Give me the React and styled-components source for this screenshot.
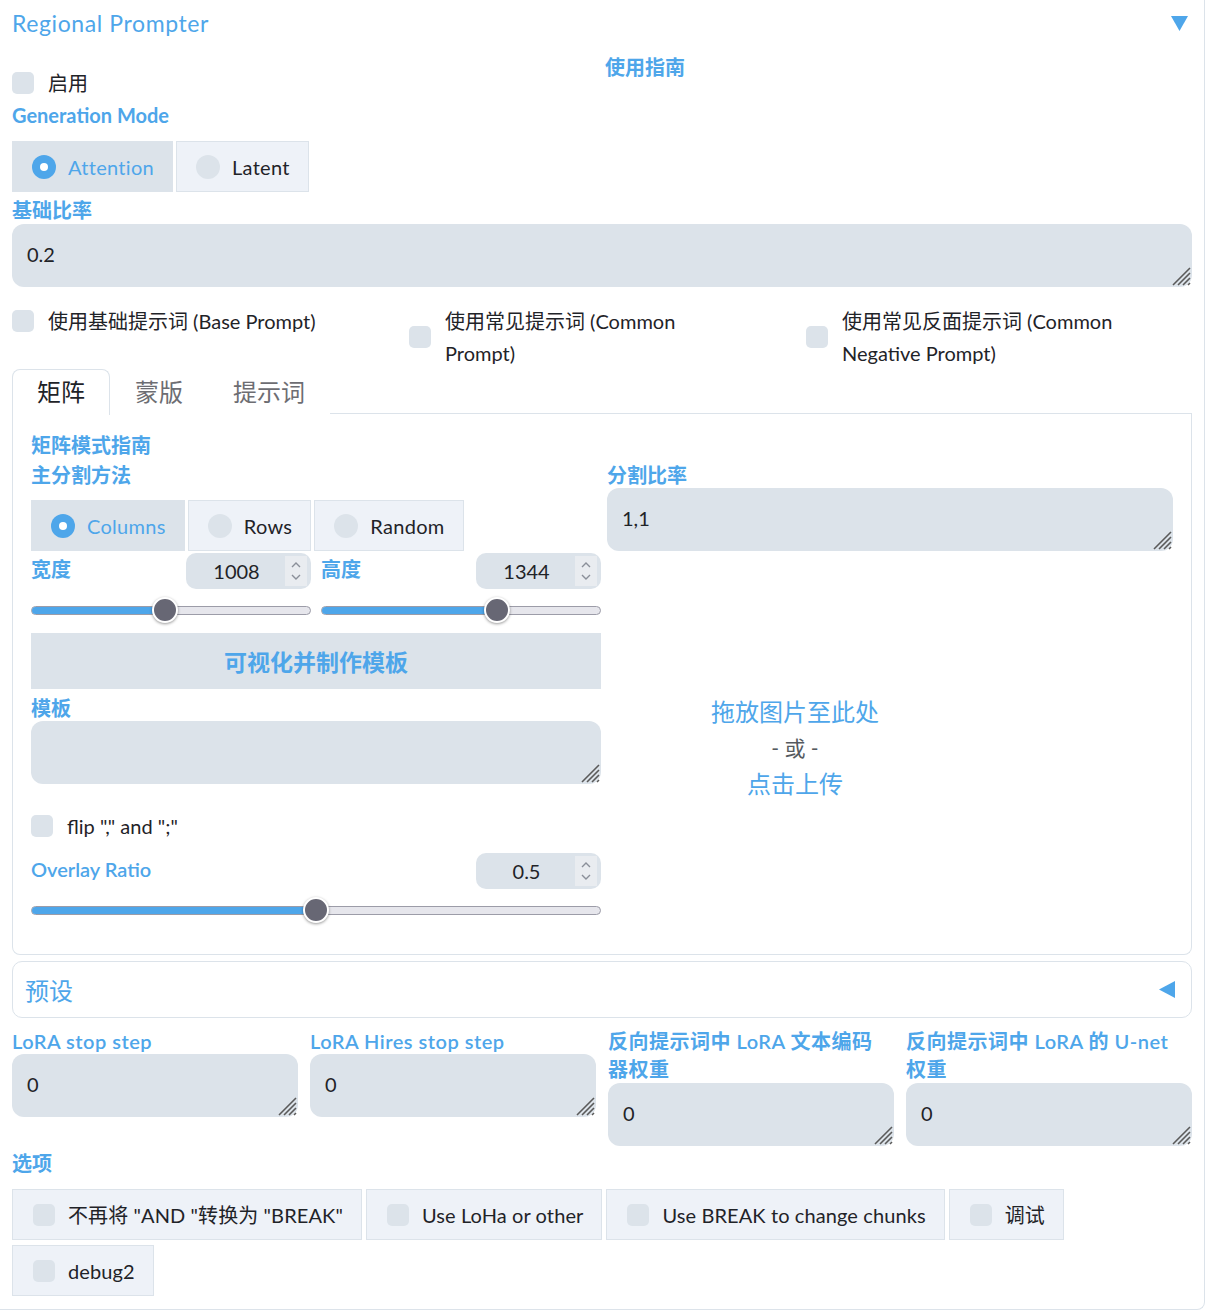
import React from 'react'
import styled, { createGlobalStyle } from 'styled-components'

const blue = '#4ea6ea'
const fill = '#dce3ea'
const light = '#eef2f8'

const Global = createGlobalStyle`
  * { box-sizing: border-box; }
  body {
    margin: 0;
    background: #fff;
    font-family: Lato, "Noto Sans CJK SC", sans-serif;
    color: #1f2328;
  }
`

const App = () => {
  return (
    <>
      <Global />
      <Block>
        <Header>
          <Title>Regional Prompter</Title>
          <svg width="17" height="15" viewBox="0 0 17 15">
            <path d="M0 0 H17 L8.5 15 Z" fill={blue} />
          </svg>
        </Header>

        <TopRow>
          <EnableCell>
            <Check label="启用" />
          </EnableCell>
          <Guide>使用指南</Guide>
        </TopRow>

        <FieldLabel $mb={13}>Generation Mode</FieldLabel>
        <RadioGroup>
          <Radio label="Attention" checked />
          <Radio label="Latent" />
        </RadioGroup>

        <FieldLabel $mt={5} $mb={1}>基础比率</FieldLabel>
        <TextBox value="0.2" />

        <CheckRow>
          <Check label="使用基础提示词 (Base Prompt)" />
          <Check label="使用常见提示词 (Common Prompt)" maxw={250} />
          <Check label="使用常见反面提示词 (Common Negative Prompt)" />
        </CheckRow>

        <TabBar>
          <Tab $active>矩阵</Tab>
          <Tab>蒙版</Tab>
          <Tab>提示词</Tab>
        </TabBar>
        <TabPanel>
          <PanelHead>矩阵模式指南</PanelHead>
          <TwoCol>
            <Col>
              <FieldLabel $mb={12}>主分割方法</FieldLabel>
              <RadioGroup>
                <Radio label="Columns" checked />
                <Radio label="Rows" />
                <Radio label="Random" />
              </RadioGroup>

              <DimRow>
                <div>
                  <NumRow>
                    <NumLabel>宽度</NumLabel>
                    <NumberBox value="1008" />
                  </NumRow>
                  <Slider pct={0.476} />
                </div>
                <div>
                  <NumRow>
                    <NumLabel>高度</NumLabel>
                    <NumberBox value="1344" />
                  </NumRow>
                  <Slider pct={0.642} />
                </div>
              </DimRow>

              <BigButton>可视化并制作模板</BigButton>

              <FieldLabel $mt={6}>模板</FieldLabel>
              <TextBox value="" />

              <FlipRow>
                <Check label={'flip "," and ";"'} />
              </FlipRow>

              <NumRow $mt={11}>
                <NumLabel $weight={600}>Overlay Ratio</NumLabel>
                <NumberBox value="0.5" />
              </NumRow>
              <Slider pct={0.5} />
            </Col>

            <Col>
              <FieldLabel>分割比率</FieldLabel>
              <TextBox value="1,1" />
              <Upload>
                <UpLine>拖放图片至此处</UpLine>
                <UpLine $muted>- 或 -</UpLine>
                <UpLine>点击上传</UpLine>
              </Upload>
            </Col>
          </TwoCol>
        </TabPanel>

        <Accordion>
          <AccTitle>预设</AccTitle>
          <svg width="16" height="17" viewBox="0 0 16 17">
            <path d="M16 0 V17 L0 8.5 Z" fill={blue} />
          </svg>
        </Accordion>

        <FourCol>
          <Cell>
            <SmallLabel $one>LoRA stop step</SmallLabel>
            <TextBox value="0" />
          </Cell>
          <Cell>
            <SmallLabel $one>LoRA Hires stop step</SmallLabel>
            <TextBox value="0" />
          </Cell>
          <Cell>
            <SmallLabel>反向提示词中 LoRA 文本编码器权重</SmallLabel>
            <TextBox value="0" />
          </Cell>
          <Cell>
            <SmallLabel>反向提示词中 LoRA 的 U-net 权重</SmallLabel>
            <TextBox value="0" />
          </Cell>
        </FourCol>

        <FieldLabel $mt={4} $mb={13}>选项</FieldLabel>
        <Options>
          <OptItem label={'不再将 "AND "转换为 "BREAK"'} />
          <OptItem label="Use LoHa or other" />
          <OptItem label="Use BREAK to change chunks" />
          <OptItem label="调试" />
          <OptItem label="debug2" />
        </Options>
      </Block>
    </>
  )
}

export default App

const Check = ({ label, maxw }) => (
  <CheckLabel>
    <Box />
    <CheckText $maxw={maxw}>{label}</CheckText>
  </CheckLabel>
)

const Radio = ({ label, checked }) => (
  <RadioItem $on={checked}>
    <Dot $on={checked} />
    <span>{label}</span>
  </RadioItem>
)

const OptItem = ({ label }) => (
  <Opt>
    <Box />
    <span>{label}</span>
  </Opt>
)

const TextBox = ({ value }) => (
  <AreaWrap>
    <Area defaultValue={value} />
    <Grip width="20" height="20" viewBox="0 0 20 20">
      <path
        d="M19 2 L2 19 M19 7 L7 19 M19 12 L12 19 M19 17 L17 19"
        stroke="#5a5a5a"
        strokeWidth="1.6"
      />
    </Grip>
  </AreaWrap>
)

const NumberBox = ({ value }) => (
  <Num>
    <NumVal>{value}</NumVal>
    <Spin>
      <svg width="12" height="22" viewBox="0 0 12 22">
        <path d="M2 7 L6 3 L10 7" stroke="#8a8f99" strokeWidth="1.4" fill="none" />
        <path d="M2 15 L6 19 L10 15" stroke="#8a8f99" strokeWidth="1.4" fill="none" />
      </svg>
    </Spin>
  </Num>
)

const Slider = ({ pct }) => (
  <SliderWrap>
    <Track>
      <Fill style={{ width: `calc(13px + ${pct} * (100% - 26px))` }} />
    </Track>
    <Thumb style={{ left: `calc(${pct} * (100% - 26px))` }} />
  </SliderWrap>
)

const Block = styled.div`
  width: 1205px;
  border-right: 1px solid ${fill};
  border-bottom: 1px solid ${fill};
  border-bottom-right-radius: 8px;
  padding: 0 12px 13px 12px;
`
const Header = styled.div`
  height: 46px;
  display: flex;
  align-items: center;
  justify-content: space-between;
  padding-right: 4px;
`
const Title = styled.div`
  font-size: 23px;
  color: ${blue};
  letter-spacing: 0.6px;
`
const TopRow = styled.div`
  display: grid;
  grid-template-columns: 70px 1fr;
  gap: 16px;
  height: 56px;
`
const EnableCell = styled.div`
  padding-top: 21px;
  white-space: nowrap;
`
const Guide = styled.div`
  text-align: center;
  font-weight: 700;
  font-size: 20px;
  line-height: 30px;
  padding-top: 6px;
  color: ${blue};
`
const FieldLabel = styled.div`
  font-size: 20px;
  line-height: 26px;
  font-weight: ${p => p.$weight || 700};
  color: ${blue};
  margin-top: ${p => p.$mt || 0}px;
  margin-bottom: ${p => p.$mb || 0}px;
`
const NumLabel = styled(FieldLabel)`
  align-self: flex-start;
  margin-top: 3px;
`
const SmallLabel = styled.div`
  font-size: 20px;
  line-height: 28px;
  font-weight: 600;
  letter-spacing: 0.5px;
  padding-right: 8px;
  color: ${blue};
  height: ${p => (p.$one ? '27px' : '56px')};
`
const RadioGroup = styled.div`
  display: flex;
  gap: 3px;
`
const RadioItem = styled.label`
  display: flex;
  align-items: center;
  gap: 12px;
  height: 51px;
  padding: 0 18px 0 19px;
  font-size: 20px;
  letter-spacing: 0.3px;
  background: ${p => (p.$on ? fill : light)};
  border: 1px solid ${fill};
  color: ${p => (p.$on ? blue : '#1f2328')};
`
const Dot = styled.span`
  width: 24px;
  height: 24px;
  border-radius: 50%;
  background: ${p => (p.$on ? blue : fill)};
  position: relative;
  &::after {
    content: '';
    display: ${p => (p.$on ? 'block' : 'none')};
    position: absolute;
    left: 8px;
    top: 8px;
    width: 8px;
    height: 8px;
    border-radius: 50%;
    background: #fff;
  }
`
const AreaWrap = styled.div`
  position: relative;
`
const Area = styled.textarea`
  display: block;
  width: 100%;
  height: 63px;
  border: none;
  outline: none;
  border-radius: 12px;
  background: ${fill};
  padding: 15px 15px;
  font-family: inherit;
  font-size: 20px;
  line-height: 30px;
  color: #1f2328;
  resize: none;
`
const Grip = styled.svg`
  position: absolute;
  right: 1px;
  bottom: 1px;
`
const CheckRow = styled.div`
  display: grid;
  grid-template-columns: repeat(3, 1fr);
  gap: 11px;
  margin-top: 18px;
  align-items: start;
`
const CheckLabel = styled.label`
  display: flex;
  align-items: center;
  gap: 14px;
  font-size: 20px;
  line-height: 32px;
`
const CheckText = styled.span`
  max-width: ${p => (p.$maxw ? `${p.$maxw}px` : 'none')};
`
const Box = styled.span`
  flex: none;
  width: 22px;
  height: 22px;
  border-radius: 5px;
  background: ${fill};
`
const TabBar = styled.div`
  display: flex;
  height: 45px;
  border-bottom: 1px solid ${fill};
`
const Tab = styled.div`
  padding: 0 24px 4px 24px;
  display: flex;
  align-items: center;
  font-size: 24px;
  color: ${p => (p.$active ? '#1f2328' : '#6d6d72')};
  border: 1px solid ${p => (p.$active ? fill : 'transparent')};
  border-bottom: none;
  border-radius: 8px 8px 0 0;
  background: #fff;
  margin-bottom: ${p => (p.$active ? '-1px' : '0')};
  height: ${p => (p.$active ? '46px' : '45px')};
`
const TabPanel = styled.div`
  border: 1px solid ${fill};
  border-top: none;
  border-radius: 0 0 8px 8px;
  padding: 16px 18px 29px 18px;
`
const PanelHead = styled.div`
  font-size: 20px;
  line-height: 30px;
  font-weight: 700;
  color: ${blue};
  margin-bottom: 2px;
`
const TwoCol = styled.div`
  display: grid;
  grid-template-columns: 570px 1fr;
  gap: 6px;
`
const Col = styled.div`
  display: flex;
  flex-direction: column;
`
const DimRow = styled.div`
  display: grid;
  grid-template-columns: 1fr 1fr;
  gap: 10px;
  margin-top: 2px;
`
const NumRow = styled.div`
  display: flex;
  justify-content: space-between;
  align-items: center;
  margin-top: ${p => p.$mt || 0}px;
`
const Num = styled.div`
  width: 125px;
  height: 36px;
  border-radius: 10px;
  background: ${fill};
  display: flex;
  align-items: center;
  padding-right: 4px;
`
const NumVal = styled.span`
  flex: 1;
  text-align: center;
  font-size: 20px;
  padding-left: 2px;
`
const Spin = styled.span`
  width: 22px;
  height: 30px;
  background: #e9ecf0;
  display: flex;
  align-items: center;
  justify-content: center;
`
const SliderWrap = styled.div`
  position: relative;
  height: 30px;
  display: flex;
  align-items: center;
  margin-top: 6px;
`
const Track = styled.div`
  position: relative;
  width: 100%;
  height: 9px;
  border-radius: 5px;
  background: #e6e6ec;
  border: 1px solid #9c9ca8;
  overflow: hidden;
`
const Fill = styled.div`
  height: 100%;
  background: ${blue};
`
const Thumb = styled.div`
  position: absolute;
  top: 2px;
  width: 26px;
  height: 26px;
  border-radius: 50%;
  background: #676774;
  border: 2px solid #fff;
  box-shadow: 0 1px 3px rgba(0, 0, 0, 0.4);
`
const BigButton = styled.div`
  margin-top: 8px;
  height: 56px;
  background: ${fill};
  display: flex;
  align-items: center;
  justify-content: center;
  font-size: 23px;
  font-weight: 700;
  color: ${blue};
`
const FlipRow = styled.div`
  margin-top: 26px;
`
const Upload = styled.div`
  flex: 1;
  width: 376px;
  margin-top: 12px;
  padding-top: 8px;
  display: flex;
  flex-direction: column;
  align-items: center;
  justify-content: center;
`
const UpLine = styled.div`
  font-size: ${p => (p.$muted ? '21px' : '24px')};
  line-height: 36px;
  color: ${p => (p.$muted ? '#555a60' : blue)};
`
const Accordion = styled.div`
  margin-top: 6px;
  height: 57px;
  border: 1px solid ${fill};
  border-radius: 10px;
  display: flex;
  align-items: center;
  justify-content: space-between;
  padding: 0 16px 0 12px;
`
const AccTitle = styled.span`
  font-size: 24px;
  color: ${blue};
`
const FourCol = styled.div`
  display: grid;
  grid-template-columns: repeat(4, 1fr);
  gap: 12px;
  margin-top: 9px;
`
const Cell = styled.div`
  display: flex;
  flex-direction: column;
`
const Options = styled.div`
  display: flex;
  flex-wrap: wrap;
  gap: 5px 4px;
`
const Opt = styled.label`
  display: flex;
  align-items: center;
  gap: 13px;
  height: 51px;
  padding: 0 18px 0 20px;
  background: ${light};
  border: 1px solid ${fill};
  font-size: 20px;
  letter-spacing: 0.1px;
`
